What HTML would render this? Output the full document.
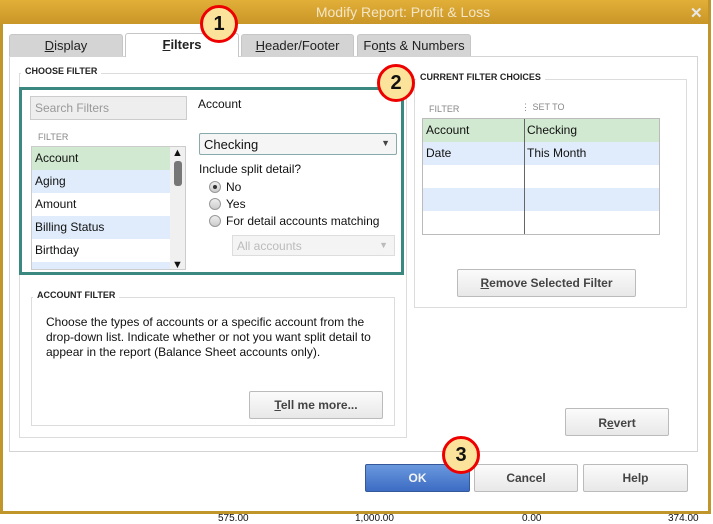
<!DOCTYPE html>
<html><head><style>
*{box-sizing:border-box;margin:0;padding:0}
body{width:713px;height:517px;position:relative;background:#fff;font-family:"Liberation Sans",Arial,sans-serif;font-size:12px;color:#111;overflow:hidden}
.a{position:absolute}
.title{left:0;top:0;width:711px;height:24px;background:linear-gradient(#e2af38,#c99628);color:#f3e6c6;font-size:14px;text-align:center;line-height:24px;padding-left:95px}
.tab{height:22px;background:#d4d4d4;border:1px solid #c6c6c6;border-bottom:none;border-radius:3px 3px 0 0;text-align:center;line-height:21px;font-size:13px;color:#222}
.grp{border:1px solid #dcdcdc}
.lbl{font-size:9px;font-weight:bold;background:#fff;padding:0 4px;color:#222}
.btn{border:1px solid #bbb;border-radius:2px;background:linear-gradient(#fbfbfb,#e8e8e8);text-align:center;font-size:12px;font-weight:bold;color:#444}
.row{height:23px;line-height:23px;padding-left:3px}
.circ{width:38px;height:38px;border-radius:50%;background:#fbe39b;border:3px solid #e00;font-size:20px;font-weight:bold;text-align:center;line-height:32px;color:#111}
.rad{width:12px;height:12px;border-radius:50%;border:1px solid #999;background:linear-gradient(#eee,#ccc)}
u{text-decoration:underline}
</style></head><body>
<div class="a title">Modify Report: Profit &amp; Loss</div>
<div class="a" style="left:690px;top:4px;color:#e8e8e8;font-size:15px;font-weight:bold">✕</div>
<div class="a" style="left:0;top:24px;width:3px;height:490px;background:#c0962a"></div>
<div class="a" style="left:708px;top:0;width:3px;height:514px;background:#c0962a"></div>
<div class="a" style="left:0;top:511px;width:711px;height:3px;background:#c0962a"></div>
<div class="a" style="left:218px;top:513px;font-size:10px">575.00</div>
<div class="a" style="left:355px;top:513px;font-size:10px">1,000.00</div>
<div class="a" style="left:522px;top:513px;font-size:10px">0.00</div>
<div class="a" style="left:668px;top:513px;font-size:10px">374.00</div>

<div class="a" style="left:9px;top:56px;width:689px;height:396px;border:1px solid #d4d4d4"></div>
<div class="a tab" style="left:9px;top:34px;width:114px"><u>D</u>isplay</div>
<div class="a tab" style="left:125px;top:33px;width:114px;height:24px;background:#fff;font-weight:bold"><u>F</u>ilters</div>
<div class="a tab" style="left:241px;top:34px;width:113px"><u>H</u>eader/Footer</div>
<div class="a tab" style="left:357px;top:34px;width:114px">Fo<u>n</u>ts &amp; Numbers</div>

<div class="a grp" style="left:19px;top:73px;width:388px;height:365px"></div>
<div class="a lbl" style="left:21px;top:66px">CHOOSE FILTER</div>
<div class="a" style="left:19px;top:87px;width:385px;height:188px;border:3px solid #3a8880"></div>
<div class="a" style="left:30px;top:96px;width:157px;height:24px;border:1px solid #ccc;background:#eee;color:#999;padding:4px 4px;font-size:12px">Search Filters</div>
<div class="a" style="left:198px;top:97px">Account</div>
<div class="a" style="left:38px;top:132px;font-size:9px;color:#888">FILTER</div>
<div class="a" style="left:31px;top:146px;width:155px;height:124px;border:1px solid #ccc;overflow:hidden">
<div class="row" style="background:#d1e9d0">Account</div>
<div class="row" style="background:#e0ecfc">Aging</div>
<div class="row">Amount</div>
<div class="row" style="background:#e0ecfc">Billing Status</div>
<div class="row">Birthday</div>
<div class="row" style="background:#e0ecfc"></div>
<div class="a" style="right:0;top:0;width:15px;height:124px;background:#f0f0f0"><div style="font-size:11px;text-align:center;line-height:12px">▲</div><div style="margin:2px auto;width:8px;height:25px;background:#777;border-radius:3px"></div><div class="a" style="bottom:0;width:15px;font-size:11px;line-height:12px;text-align:center">▼</div></div>
</div>
<div class="a" style="left:199px;top:133px;width:198px;height:22px;border:1px solid #8aa;border-radius:2px;background:#f5f5f5;padding:3px 4px;font-size:13px">Checking<span class="a" style="right:6px;top:4px;font-size:9px;color:#444">▼</span></div>
<div class="a" style="left:199px;top:162px">Include split detail?</div>
<div class="a rad" style="left:209px;top:181px"><div style="width:4px;height:4px;border-radius:50%;background:#333;margin:3px"></div></div><div class="a" style="left:226px;top:180px">No</div>
<div class="a rad" style="left:209px;top:198px"></div><div class="a" style="left:226px;top:197px">Yes</div>
<div class="a rad" style="left:209px;top:215px"></div><div class="a" style="left:226px;top:214px">For detail accounts matching</div>
<div class="a" style="left:232px;top:235px;width:163px;height:21px;border:1px solid #ddd;background:#f4f4f4;color:#bbb;padding:3px 4px">All accounts<span class="a" style="right:6px;top:4px;font-size:9px">▼</span></div>

<div class="a grp" style="left:31px;top:297px;width:364px;height:129px"></div>
<div class="a lbl" style="left:33px;top:290px">ACCOUNT FILTER</div>
<div class="a" style="left:46px;top:315px;line-height:15px;width:340px">Choose the types of accounts or a specific account from the drop-down list. Indicate whether or not you want split detail to appear in the report (Balance Sheet accounts only).</div>
<div class="a btn" style="left:249px;top:391px;width:134px;height:28px;line-height:26px"><u>T</u>ell me more...</div>

<div class="a grp" style="left:414px;top:79px;width:273px;height:229px"></div>
<div class="a lbl" style="left:416px;top:72px">CURRENT FILTER CHOICES</div>
<div class="a" style="left:429px;top:104px;font-size:9px;color:#888">FILTER</div>
<div class="a" style="left:521px;top:102px;font-size:9px;color:#888">⋮ SET TO</div>
<div class="a" style="left:422px;top:118px;width:238px;height:117px;border:1px solid #bbb;overflow:hidden">
<div class="row" style="background:#d1e9d0">Account<span class="a" style="left:104px">Checking</span></div>
<div class="row" style="background:#e0ecfc">Date<span class="a" style="left:104px">This Month</span></div>
<div class="row"></div><div class="row" style="background:#e0ecfc"></div>
<div class="a" style="left:101px;top:0;width:1px;height:116px;background:#666"></div>
</div>
<div class="a btn" style="left:457px;top:269px;width:179px;height:28px;line-height:26px"><u>R</u>emove Selected Filter</div>
<div class="a btn" style="left:565px;top:408px;width:104px;height:28px;line-height:28px">R<u>e</u>vert</div>

<div class="a btn" style="left:365px;top:464px;width:105px;height:28px;line-height:27px;background:linear-gradient(#6a98de,#3c6cc4);border-color:#35589a;color:#f4f4f4">OK</div>
<div class="a btn" style="left:474px;top:464px;width:104px;height:28px;line-height:27px">Cancel</div>
<div class="a btn" style="left:583px;top:464px;width:105px;height:28px;line-height:27px">Help</div>

<div class="a circ" style="left:200px;top:5px">1</div>
<div class="a circ" style="left:377px;top:64px">2</div>
<div class="a circ" style="left:442px;top:436px">3</div>
</body></html>
